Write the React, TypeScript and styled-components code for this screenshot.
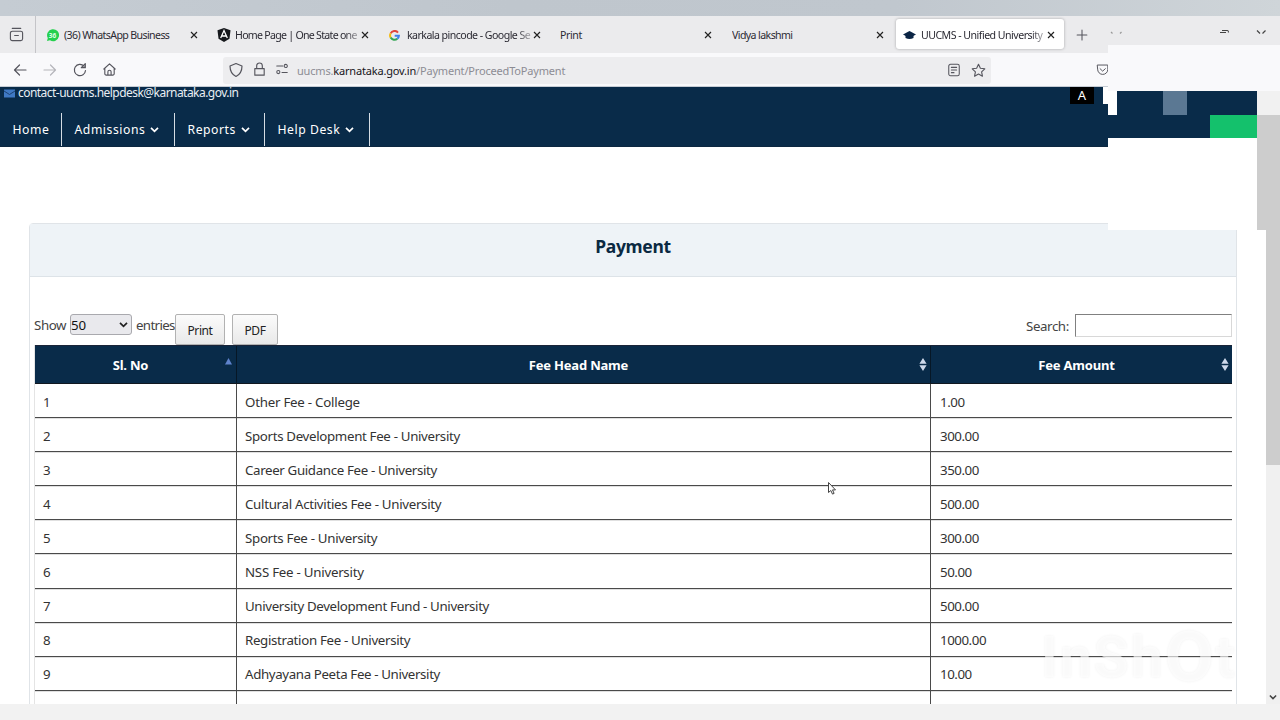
import React from 'react';
import styled, { createGlobalStyle, css } from 'styled-components';

const Global = createGlobalStyle`
  * { box-sizing: border-box; }
  html, body { margin: 0; padding: 0; background: #fff; }
  body { font-family: "Noto Sans", "Open Sans", sans-serif; overflow: hidden; }
  svg { display: block; flex: none; }
`;

const Screen = styled.div`
  position: relative;
  width: 1280px;
  height: 720px;
  overflow: hidden;
  display: flex;
  flex-direction: column;
  background: #fff;
`;

const TopStrip = styled.div`
  height: 16px;
  flex: none;
  background: linear-gradient(90deg, #c5ccd3 0%, #bfc6cd 40%, #c0c7ce 70%, #cfd5d9 100%);
`;

const TabBar = styled.div`
  height: 37px;
  flex: none;
  display: flex;
  align-items: flex-start;
  background: #ebebed;
`;

const RecentBox = styled.div`
  width: 36px;
  height: 37px;
  display: flex;
  align-items: center;
  padding-left: 9px;
  border-right: 1px solid #c4c4c8;
`;

const Tab = styled.div<{ $w: number; $active?: boolean; $pad?: number; $end?: number }>`
  width: ${(p) => p.$w}px;
  height: ${(p) => (p.$active ? 30 : 37)}px;
  margin-top: ${(p) => (p.$active ? 3 : 0)}px;
  padding: ${(p) => (p.$active ? '2px 8px 0 7px' : `1px ${p.$end ?? 8}px 0 ${p.$pad ?? 10}px`)};
  display: flex;
  align-items: center;
  ${(p) =>
    p.$active &&
    css`
      background: #fff;
      border-radius: 3px;
      box-shadow: 0 0 3px rgba(0, 0, 0, 0.3);
    `}
`;

const TabIcon = styled.span`
  width: 18px;
  display: flex;
  flex: none;
`;

const TabTitle = styled.span<{ $fade?: boolean; $ls?: number }>`
  flex: 1;
  min-width: 0;
  overflow: hidden;
  white-space: nowrap;
  font-size: 10.6px;
  line-height: 18px;
  letter-spacing: ${(p) => p.$ls ?? -0.55}px;
  color: #2b2a33;
  ${(p) =>
    p.$fade &&
    css`
      mask-image: linear-gradient(90deg, #000 88%, rgba(0, 0, 0, 0.25) 100%);
    `}
`;

const CloseSlot = styled.span`
  width: 10px;
  display: flex;
  justify-content: center;
`;

const Toolbar = styled.div`
  height: 34px;
  flex: none;
  display: flex;
  align-items: center;
  background: #f9f9fb;
  border-bottom: 1px solid #c6ccd4;
`;

const NavIcons = styled.div`
  width: 223px;
  display: flex;
  gap: 14px;
  padding-left: 12px;
`;

const UrlBar = styled.div`
  width: 768px;
  height: 27px;
  margin-top: 1px;
  display: flex;
  align-items: center;
  padding: 0 5px;
  background: #ededef;
  border-radius: 3px;
`;

const UrlIcons = styled.div<{ $gap: number }>`
  display: flex;
  gap: ${(p) => p.$gap}px;
`;

const Url = styled.div`
  flex: 1;
  padding: 0 0 0 8px;
  font-size: 11px;
  letter-spacing: -0.18px;
  color: #8c8c94;
  b { font-weight: 400; color: #15141a; }
`;

const PocketSlot = styled.div`
  margin-left: 105px;
  display: flex;
`;

const Viewport = styled.div`
  height: 617px;
  flex: none;
  display: flex;
  overflow: hidden;
`;

const Page = styled.div`
  width: 1266px;
  height: 617px;
  overflow: hidden;
`;

const SiteHeader = styled.header`
  width: 1108px;
  height: 60px;
  display: flex;
  flex-direction: column;
  background: #092b49;
  border-bottom: 1px solid #0c2740;
  color: #fff;
`;

const ContactRow = styled.div`
  height: 26px;
  display: flex;
  align-items: flex-start;
  justify-content: space-between;
`;

const Contact = styled.div`
  display: flex;
  align-items: center;
  gap: 3px;
  height: 12px;
  padding-left: 4px;
  font-size: 12px;
  letter-spacing: -0.54px;
  line-height: 12px;
  white-space: nowrap;
  color: #e8eef4;
`;

const FontButton = styled.div`
  width: 24px;
  height: 17px;
  margin-right: 14px;
  display: flex;
  align-items: center;
  justify-content: center;
  padding-bottom: 2px;
  background: #000;
  font-size: 13px;
`;

const Menu = styled.nav`
  display: flex;
  height: 33px;
`;

const MenuItem = styled.div<{ $w: number }>`
  width: ${(p) => p.$w}px;
  padding: 0 0 1px 12.5px;
  display: flex;
  align-items: center;
  gap: 5px;
  border-right: 1px solid #d5dde4;
  font-size: 12.2px;
  letter-spacing: 0.55px;
  white-space: nowrap;
`;

const Card = styled.section`
  width: 1208px;
  height: 520px;
  margin: 76px 0 0 29px;
  border: 1px solid #e0e4e8;
  border-radius: 4px 4px 0 0;
`;

const CardTitle = styled.h1`
  height: 53px;
  margin: 0;
  padding-top: 10px;
  background: #eef3f7;
  border-bottom: 1px solid #dde3e8;
  text-align: center;
  font-size: 17.5px;
  letter-spacing: -0.35px;
  line-height: 25px;
  font-weight: 700;
  color: #0a2942;
`;

const Controls = styled.div`
  height: 68px;
  padding: 37px 4px 0 4px;
  display: flex;
  align-items: flex-start;
  font-size: 13.3px;
  color: #444;
`;

const ControlText = styled.span<{ $w: number; $top: number; $ls?: number }>`
  width: ${(p) => p.$w}px;
  padding-top: ${(p) => p.$top}px;
  line-height: 20px;
  letter-spacing: ${(p) => p.$ls ?? -0.4}px;
  white-space: nowrap;
`;

const PageSize = styled.div`
  width: 62px;
  height: 21px;
  margin-right: 4px;
  padding: 0 3px 0 0;
  display: flex;
  align-items: center;
  justify-content: space-between;
  background: #e9e9ed;
  border: 1px solid #a9a9ae;
  border-radius: 3px;
  color: #111;
`;

const ToolButton = styled.button<{ $w: number }>`
  width: ${(p) => p.$w}px;
  height: 31px;
  margin: 0 7px 0 0;
  padding: 2px 0 0;
  border: 1px solid #b2b2b2;
  border-radius: 2px;
  background: linear-gradient(#fbfbfb, #e9e9e9);
  font: 12px "Noto Sans", sans-serif;
  letter-spacing: -0.4px;
  color: #222;
`;

const Spacer = styled.div`
  flex: 1;
`;

const SearchInput = styled.input`
  width: 157px;
  height: 23px;
  border: 1px solid #d8d8d8;
  border-top-color: #808080;
  border-left-color: #808080;
  background: #fff;
`;

const Table = styled.div`
  margin: 0 4px 0 4px;
  border-left: 1px solid #e4e4e4;
`;

const rowCols = css`
  display: grid;
  grid-template-columns: 202px 694px 1fr;
`;

const HeadRow = styled.div`
  ${rowCols}
  height: 39px;
  background: #092b49;
  border-top: 1px solid #1a2438;
  border-bottom: 1px solid #111820;
  color: #fff;
  font-size: 13px;
  font-weight: 700;
  letter-spacing: -0.2px;
`;

const HeadCell = styled.div`
  display: flex;
  align-items: center;
  padding: 1px 3px 0 1px;
  border-right: 1px solid #061726;
  &:last-child { border-right: 0; }
  span { flex: 1; text-align: center; }
`;

const SortSlot = styled.i<{ $up?: boolean }>`
  display: flex;
  padding-right: ${(p) => (p.$up ? 1 : 0)}px;
  margin-top: ${(p) => (p.$up ? -8 : -2)}px;
`;

const Row = styled.div`
  ${rowCols}
  height: 34.1px;
  border-bottom: 1px solid #4a4a4a;
  box-shadow: 0 1px 0 rgba(0, 0, 0, 0.12);
`;

const Cell = styled.div<{ $ls?: number; $pad?: number }>`
  padding: 1.6px 0 0 ${(p) => p.$pad ?? 8}px;
  border-right: 1px solid #4a4a4a;
  font-size: 13.3px;
  line-height: 32px;
  color: #333;
  white-space: nowrap;
  letter-spacing: ${(p) => p.$ls ?? 0}px;
  &:last-child { border-right: 0; }
  ${Row}:last-child & { padding-top: 3px; }
`;

const ScrollTrack = styled.div`
  width: 14px;
  height: 617px;
  display: flex;
  flex-direction: column;
  justify-content: space-between;
  align-items: center;
  padding-bottom: 3px;
  background: #f0f0f0;
`;

const ScrollThumb = styled.div`
  width: 14px;
  height: 378px;
  background: #cdcdcd;
`;

const BottomStrip = styled.div`
  height: 16px;
  flex: none;
  background: #f2f2f2;
`;

/* Misaligned capture region drawn over the right side of the window. */
const Overlap = styled.div`
  position: absolute;
  left: 1103px;
  top: 45px;
  width: 177px;
  padding-left: 5px;
`;

const Band = styled.div<{ $h: number }>`
  display: flex;
  height: ${(p) => p.$h}px;
`;

const Block = styled.div<{ $w: number; $c: string }>`
  width: ${(p) => p.$w}px;
  background: ${(p) => p.$c};
`;

const HeaderNotch = styled.div`
  position: absolute;
  left: 1103px;
  top: 87px;
  width: 5px;
  height: 17px;
  background: #fff;
`;

const WindowButtons = styled.div`
  position: absolute;
  left: 1108px;
  top: 28px;
  width: 172px;
  height: 8px;
`;

const Pointer = styled.div`
  position: absolute;
  left: 827px;
  top: 481px;
`;

const Watermark = styled.div`
  position: absolute;
  left: 1041px;
  top: 623px;
  width: 210px;
  font: 700 57px/70px Roboto, sans-serif;
  letter-spacing: 2px;
  white-space: nowrap;
  color: rgba(255, 255, 255, 0.66);
  text-shadow: 0 0 3px rgba(0, 0, 0, 0.06);
  span { font-size: 71px; line-height: 60px; vertical-align: -4px; }
`;

const Close = () => (
  <svg width="8" height="8" viewBox="0 0 8 8">
    <path d="M1 1l6 6M7 1L1 7" stroke="#222" strokeWidth="1.15" fill="none" />
  </svg>
);

const Chevron = ({ color = '#fff', size = 9 }: { color?: string; size?: number }) => (
  <svg width={size} height={size} viewBox="0 0 9 9" fill="none" stroke={color} strokeWidth="1.7">
    <path d="M1 2.8l3.5 3.5L8 2.8" />
  </svg>
);

const Line = ({ d, w = 16, c = '#55555d', sw = 1.2 }: { d: string; w?: number; c?: string; sw?: number }) => (
  <svg width={w} height={w} viewBox="0 0 16 16" fill="none" stroke={c} strokeWidth={sw} strokeLinecap="round" strokeLinejoin="round">
    <path d={d} />
  </svg>
);

const SortBoth = () => (
  <svg width="8" height="13" viewBox="0 0 8 13">
    <path d="M4 0l3.6 5.7H.4zM4 13L.4 7.3h7.2z" fill="#cdd8ea" />
  </svg>
);

const SortUp = () => (
  <svg width="7" height="7" viewBox="0 0 7 7">
    <path d="M3.5 0L7 6.5H0z" fill="#5f83cc" />
  </svg>
);

const fees: { name: string; amount: string; ls: number }[] = [
  { name: 'Other Fee - College', amount: '1.00', ls: -0.24 },
  { name: 'Sports Development Fee - University', amount: '300.00', ls: -0.33 },
  { name: 'Career Guidance Fee - University', amount: '350.00', ls: -0.35 },
  { name: 'Cultural Activities Fee - University', amount: '500.00', ls: -0.3 },
  { name: 'Sports Fee - University', amount: '300.00', ls: -0.3 },
  { name: 'NSS Fee - University', amount: '50.00', ls: -0.25 },
  { name: 'University Development Fund - University', amount: '500.00', ls: -0.36 },
  { name: 'Registration Fee - University', amount: '1000.00', ls: -0.33 },
  { name: 'Adhyayana Peeta Fee - University', amount: '10.00', ls: -0.37 },
  { name: 'Affiliation Fee - University', amount: '', ls: -0.33 },
];

export default function App() {
  return (
    <Screen>
      <Global />
      <TopStrip />
      <TabBar>
        <RecentBox>
          <Line w={15} d="M3.5 1.5h9M1.5 6.5a2 2 0 0 1 2-2h9a2 2 0 0 1 2 2v6a2 2 0 0 1-2 2h-9a2 2 0 0 1-2-2zM6 9h4" />
        </RecentBox>
        <Tab $w={171}>
          <TabIcon>
            <svg width="13" height="13" viewBox="0 0 13 13">
              <path d="M1 12l.8-3A6 6 0 1 1 4 11.3z" fill="#25d04e" />
              <text x="6.5" y="9" fontSize="6.5" fontWeight="700" textAnchor="middle" fill="#dfffe6">36</text>
            </svg>
          </TabIcon>
          <TabTitle $ls={-0.62}>(36) WhatsApp Business</TabTitle>
          <CloseSlot><Close /></CloseSlot>
        </Tab>
        <Tab $w={171}>
          <TabIcon>
            <svg width="14" height="14" viewBox="0 0 14 14">
              <path d="M7 0l6.5 2.3-1 8.5L7 14l-5.5-3.2-1-8.5z" fill="#16181c" />
              <path d="M3.7 10L7 2.5 10.3 10M5 8h4" fill="none" stroke="#fff" strokeWidth="1.3" />
            </svg>
          </TabIcon>
          <TabTitle $fade $ls={-0.72}>Home Page | One State one</TabTitle>
          <CloseSlot><Close /></CloseSlot>
        </Tab>
        <Tab $w={172} $pad={11}>
          <TabIcon>
            <svg width="11" height="11" viewBox="0 0 12 12" fill="none" strokeWidth="2.2">
              <path d="M9.8 2.8A4.8 4.8 0 0 0 1.8 3.7" stroke="#e0453a" />
              <path d="M1.8 3.7a4.8 4.8 0 0 0 0 4.6" stroke="#f4b90b" />
              <path d="M1.8 8.3a4.8 4.8 0 0 0 7.3 1.3" stroke="#35a655" />
              <path d="M9.1 9.6A4.6 4.6 0 0 0 10.8 6.2H6.200" stroke="#3f7fe8" />
            </svg>
          </TabIcon>
          <TabTitle $fade $ls={-0.55}>karkala pincode - Google Se</TabTitle>
          <CloseSlot><Close /></CloseSlot>
        </Tab>
        <Tab $w={171}>
          <TabTitle $ls={-0.4}>Print</TabTitle>
          <CloseSlot><Close /></CloseSlot>
        </Tab>
        <Tab $w={175} $end={11} $pad={11}>
          <TabTitle $ls={-0.6}>Vidya lakshmi</TabTitle>
          <CloseSlot><Close /></CloseSlot>
        </Tab>
        <Tab $w={168} $active>
          <TabIcon>
            <svg width="13" height="10" viewBox="0 0 13 10">
              <path d="M6.5 1L13 4.5 6.5 8 0 4.5z" fill="#0b2545" />
              <path d="M2.5 5v3q4 2 8 0V5z" fill="#0b2545" />
            </svg>
          </TabIcon>
          <TabTitle $fade $ls={-0.52}>UUCMS - Unified University</TabTitle>
          <CloseSlot><Close /></CloseSlot>
        </Tab>
        <Tab $w={36} $pad={12}>
          <Line w={12} sw={1.4} d="M8 1.5v13M1.5 8h13" />
        </Tab>
      </TabBar>
      <Toolbar>
        <NavIcons>
          <Line d="M14 8H2.5M7.5 3l-5 5 5 5" />
          <Line c="#b5b5ba" d="M2 8h11.5M8.5 3l5 5-5 5" />
          <Line d="M13.5 8.5A5.6 5.6 0 1 1 12 4.2M13.3 1.7v4h-4z" />
          <Line d="M2 7.5l6-5.5 6 5.5M3 7v5.5a1.5 1.5 0 0 0 1.5 1.5h7a1.5 1.5 0 0 0 1.5-1.5V7M6.3 14v-3.5a1.7 1.7 0 0 1 3.4 0V14" w={15} />
        </NavIcons>
        <UrlBar>
          <UrlIcons $gap={8}>
            <Line d="M8 1.5L14 4c0 5-2 8.5-6 10.5C4 12.5 2 9 2 4z" />
            <Line w={15} d="M3 7h10v7H3zM5 7V4a3 3 0 0 1 6 0v3" />
            <Line w={14} d="M2 4.5h7M14 12H8M10.5 4.5a1.8 1.8 0 1 0 3.6 0a1.8 1.8 0 1 0-3.6 0M2 11.5a1.8 1.8 0 1 0 3.6 0a1.8 1.8 0 1 0-3.6 0" />
          </UrlIcons>
          <Url>uucms.<b>karnataka.gov.in</b>/Payment/ProceedToPayment</Url>
          <UrlIcons $gap={10}>
            <Line w={14} d="M4 1.5h8a2 2 0 0 1 2 2v9a2 2 0 0 1-2 2H4a2 2 0 0 1-2-2v-9a2 2 0 0 1 2-2zM5 5h6M5 8h6M5 11h3" />
            <Line w={15} d="M8 1.3l2 4.3 4.7.6-3.4 3.2.9 4.7L8 11.8l-4.2 2.3.9-4.7L1.3 6.2 6 5.6z" />
          </UrlIcons>
        </UrlBar>
        <PocketSlot>
          <Line w={13} d="M2 2.5h12.5v5.5a6.2 6 0 0 1-12.5 0zM5 7l3.2 3L11.5 7" />
        </PocketSlot>
      </Toolbar>
      <Viewport>
        <Page>
          <SiteHeader>
            <ContactRow>
              <Contact>
                <svg width="11" height="9" viewBox="0 0 11 9">
                  <rect y=".5" width="11" height="8" fill="#3f79c4" />
                  <path d="M0 2l5.5 3.5L11 2" stroke="#1c4172" fill="none" />
                </svg>
                contact-uucms.helpdesk@karnataka.gov.in
              </Contact>
              <FontButton>A</FontButton>
            </ContactRow>
            <Menu>
              <MenuItem $w={62}>Home</MenuItem>
              <MenuItem $w={113}>Admissions <Chevron /></MenuItem>
              <MenuItem $w={90}>Reports <Chevron /></MenuItem>
              <MenuItem $w={105}>Help Desk <Chevron /></MenuItem>
            </Menu>
          </SiteHeader>
          <Card>
            <CardTitle>Payment</CardTitle>
            <Controls>
              <ControlText $w={36} $top={1}>Show</ControlText>
              <PageSize>50 <Chevron color="#222" size={9} /></PageSize>
              <ControlText $w={39} $top={1} $ls={-0.65}>entries</ControlText>
              <ToolButton $w={50}>Print</ToolButton>
              <ToolButton $w={46}>PDF</ToolButton>
              <Spacer />
              <ControlText $w={49} $top={2}>Search:</ControlText>
              <SearchInput />
            </Controls>
            <Table>
              <HeadRow>
                <HeadCell><span>Sl. No</span><SortSlot $up><SortUp /></SortSlot></HeadCell>
                <HeadCell><span>Fee Head Name</span><SortSlot><SortBoth /></SortSlot></HeadCell>
                <HeadCell><span>Fee Amount</span><SortSlot><SortBoth /></SortSlot></HeadCell>
              </HeadRow>
              {fees.map(({ name, amount, ls }, i) => (
                <Row key={name}>
                  <Cell>{i < 9 ? i + 1 : ''}</Cell>
                  <Cell $ls={ls}>{name}</Cell>
                  <Cell $pad={9} $ls={-0.45}>{amount}</Cell>
                </Row>
              ))}
            </Table>
          </Card>
        </Page>
        <ScrollTrack>
          <ScrollThumb />
          <Chevron color="#444" size={8} />
        </ScrollTrack>
      </Viewport>
      <BottomStrip />
      <HeaderNotch />
      <Overlap>
        <Band $h={46}><Block $w={172} $c="#f9f9fb" /></Band>
        <Band $h={24}>
          <Block $w={9} $c="#fff" />
          <Block $w={46} $c="#092b49" />
          <Block $w={24} $c="#5b7893" />
          <Block $w={70} $c="#092b49" />
          <Block $w={23} $c="#f1f1f1" />
        </Band>
        <Band $h={23}>
          <Block $w={102} $c="#092b49" />
          <Block $w={47} $c="#14c16c" />
          <Block $w={23} $c="#cdcdcd" />
        </Band>
        <Band $h={92}>
          <Block $w={149} $c="#fff" />
          <Block $w={23} $c="#cdcdcd" />
        </Band>
      </Overlap>
      <WindowButtons>
        <svg width="172" height="8" viewBox="0 0 172 8" fill="none" stroke="#444" strokeWidth="1.2">
          <path d="M3 4l1.5 1.5M12 5.5L13.5 4" stroke="#999" />
          <path d="M112 4.5h6M114 2.5h5.5q1 0 1 2" />
          <path d="M149 2.500l3 3M157.500 2.500l-3 3" />
        </svg>
      </WindowButtons>
      <Pointer>
        <svg width="10" height="15" viewBox="0 0 10 15">
          <path d="M1.5 1.5v10l2.3-2 1.7 3.6 1.6-.7-1.6-3.500h3z" fill="#fff" stroke="#444" strokeWidth="1" />
        </svg>
      </Pointer>
      <Watermark>InSh<span>O</span>t</Watermark>
    </Screen>
  );
}
